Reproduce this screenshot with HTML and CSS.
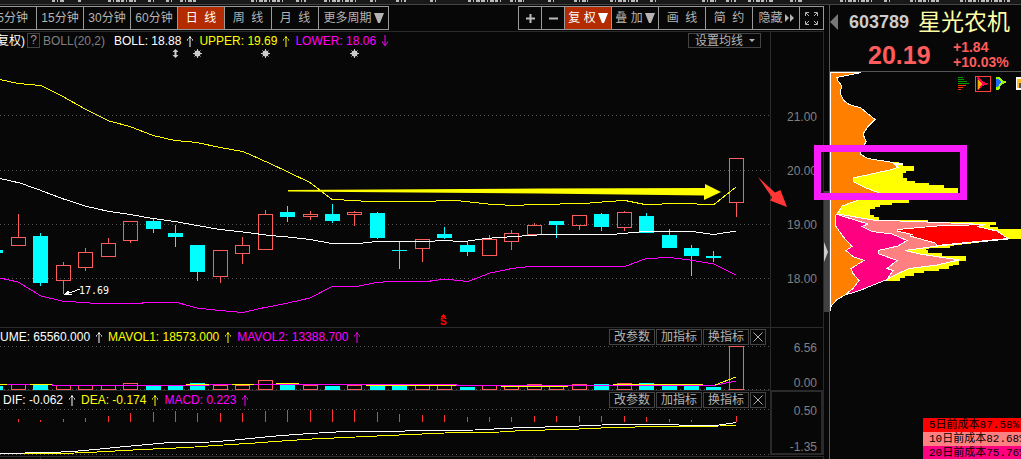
FILE: index.html
```html
<!DOCTYPE html>
<html lang="zh-CN">
<head>
<meta charset="utf-8">
<title>603789 星光农机</title>
<link rel="stylesheet" href="styles.css">
</head>
<body>
<svg class="defs" aria-hidden="true">
  <symbol id="up" viewBox="0 0 8 12"><path d="M4 1v11M3 2.5h2M1.5 5.5v-1l1-1M6.5 5.5v-1l-1-1" fill="none" stroke="currentColor"/></symbol>
  <symbol id="down" viewBox="0 0 8 12"><path d="M4 0v11M1.500 6.500v1l2.500 3l2.500-3v-1" fill="none" stroke="currentColor"/></symbol>
  <symbol id="close" viewBox="0 0 10 10"><path d="M.5.5l9 9M9.500.5l-9 9" fill="none" stroke="currentColor"/></symbol>
  <symbol id="tri" viewBox="0 0 10 10"><path d="M0 0h10L6 10H4z" fill="currentColor"/></symbol>
</svg>
<div class="app">
  <div class="strip"><svg viewBox="0 0 1021 4" preserveAspectRatio="none"><path d="M52 1h12M78 1h4M108 1h28M148 1h8M166 1h8M180 1h16M251 1h32M296 1h10M324 1h34M370 1h6M396 1h10M430 1h8M468 1h14M482 1h20M510 1h14M548 1h8M574 1h14M610 1h28M650 1h6M702 1h14M726 1h10M748 1h26M790 1h12M840 1h32M884 1h8M910 1h30M960 1h50"/></svg></div>
  <div class="body">
    <main class="main">
      <div class="toolbar">
        <div class="group periods">
          <button class="tb first">5分钟</button><button class="tb">15分钟</button><button class="tb">30分钟</button><button class="tb">60分钟</button><button class="tb on">日&nbsp; 线</button><button class="tb">周&nbsp; 线</button><button class="tb">月&nbsp; 线</button><button class="tb wide">更多周期<svg class="tri"><use href="#tri"/></svg></button>
        </div>
        <div class="group">
          <button class="tb small" aria-label="放大"><svg class="pm" viewBox="0 0 9 9"><path d="M0 4.500h9M4.500 0v9"/></svg></button><button class="tb small" aria-label="缩小"><svg class="pm" viewBox="0 0 9 9"><path d="M0 4.500h9"/></svg></button><button class="tb on">复 权<svg class="tri"><use href="#tri"/></svg></button><button class="tb">叠 加<svg class="tri"><use href="#tri"/></svg></button><button class="tb">画&nbsp; 线</button><button class="tb">简&nbsp; 约</button><button class="tb">隐藏<svg class="ff" viewBox="0 0 9 8"><path d="M0 0l4 4l-4 4zM5 0l4 4l-4 4z"/></svg></button><button class="tb small last" aria-label="全屏"><svg class="full" viewBox="0 0 13 13"><path d="M.5 4V.5H4M9 .5h3.500V4M12.500 9v3.500H9M4 12.500H.5V9M1 1l3 3M12 1L9 4M12 12L9 9M1 12l3-3"/></svg></button>
        </div>
      </div>
      <section class="panel k">
        <div class="plot">
          <header class="info">
            <span class="clip">复权)</span><button class="help">?</button><span class="dim">BOLL(20,2)</span>
            <span class="val">BOLL: 18.88<svg class="arr"><use href="#up"/></svg></span>
            <span class="val yellow">UPPER: 19.69<svg class="arr"><use href="#up"/></svg></span>
            <span class="val magenta">LOWER: 18.06<svg class="arr"><use href="#down"/></svg></span>
            <button class="mini avg">设置均线<svg class="caret" viewBox="0 0 6 3"><path d="M0 0h6L3 3z"/></svg></button>
          </header>
          <svg class="chart candles" viewBox="0 48 770 279" preserveAspectRatio="xMaxYMin meet">
            <path class="grid" d="M0 115.500H772M0 170.500H772M0 224.500H772M0 278.500H772"/>
            <g class="mark"><path d="M175.500 49l3 3h-2v3h2l-3 3l-3-3h2v-3h-2z"/>
              <g id="star"><circle cx="197.500" cy="53.500" r="3"/><path class="rays" d="M197.500 49v9M193 53.500h9M194.500 50.500l6 6M200.500 50.500l-6 6"/></g><use href="#star" x="68"/><use href="#star" x="157"/></g>
            <path class="red" d="M11.500 237.500h14v8h-14zM18.500 214v23M56.500 265.500h14v15h-14zM63.500 262v3M63.500 281v13M78.500 252.500h14v15h-14zM85.500 248v4M85.500 268v3M101.500 243.500h14v13h-14zM108.500 238v5M123.500 221.500h14v19h-14zM130.500 241v2M213.500 250.500h14v26h-14zM220.500 277v6M235.500 245.500h14v8h-14zM242.500 237v8M242.500 254v10M258.500 214.500h14v35h-14zM265.500 210v4M303.500 214.500h14v2h-14zM310.500 211v3M310.500 217v3M347.500 212.500h14v2h-14zM354.500 211v1M354.500 215v11M415.500 239.500h14v9h-14zM422.500 249v13M482.500 239.500h14v16h-14zM489.500 235v4M504.500 233.500h14v8h-14zM511.500 230v3M511.500 242v8M527.500 225.500h14v9h-14zM534.500 223v2M572.500 215.500h14v10h-14zM579.500 226v4M617.500 212.500h14v15h-14zM624.500 211v1M624.500 228v3M729.500 158.500h14v44h-14zM736.500 203v14"/>
            <path class="cyan" d="M0 250h3v3h-3zM33 236h15v47h-15zM40 233h1v53h-1zM146 221h15v8h-15zM153 219h1v14h-1zM168 233h15v4h-15zM175 225h1v22h-1zM190 245h15v27h-15zM197 272h1v9h-1zM280 212h15v5h-15zM287 206h1v16h-1zM325 214h15v7h-15zM332 204h1v19h-1zM370 213h15v25h-15zM377 212h1v27h-1zM392 250h15v1h-15zM399 242h1v27h-1zM437 234h15v4h-15zM444 227h1v12h-1zM460 245h15v7h-15zM467 242h1v14h-1zM549 221h15v4h-15zM556 225h1v13h-1zM594 214h15v13h-15zM601 213h1v18h-1zM639 216h15v17h-15zM646 213h1v4h-1zM662 235h15v13h-15zM669 229h1v7h-1zM684 248h15v8h-15zM691 245h1v31h-1zM706 256h15v2h-15zM713 251h1v11h-1z"/>
            <polyline class="line yellow" points="0,79.500 18,83.500 41,85.500 62,96 85,109 109,121 130,126.500 153,135.500 175,140.500 197,142.500 220,147.500 243,151.500 270,163.500 288,172 310,182.500 332,199.500 355,200.500 367,201.500 433,201.500 440,200.500 456,200.500 470,202 492,204.500 518,205.500 530,204.500 545,204.500 590,203 608,201.500 625,200.500 645,204.500 680,203.500 714,204.500 736,187"/>
            <polyline class="line white" points="0,178.500 20,183 41,190.500 62,198.500 85,206 109,211.500 130,214.500 153,218.500 175,221.500 197,225.500 220,229.500 243,232 270,235.500 288,237 310,239.500 332,243.500 358,243.500 377,241.500 430,241.500 440,240.500 465,241.500 485,238.500 530,235.500 545,234.500 612,234.500 645,231.500 692,231.500 714,234.500 736,231"/>
            <polyline class="line magenta" points="0,278 18,282 41,296 62,301 97,303.500 140,303.500 145,302.500 177,302.500 197,308 220,310.500 243,312.500 260,308.500 288,303 310,298 332,286.500 356,286.500 377,282.500 390,281.500 427,281.500 445,279 468,281.500 490,273 512,268.500 530,266.500 625,266.500 646,258.500 670,257.500 690,260 714,264 736,275"/>
            <path class="pointer" d="M80 289L68 293.500"/><path class="head" d="M64 294.500l4.500-4l1 3l2 1z"/>
            <text class="low" x="79" y="294">17.69</text>
            <path class="event" d="M443.500 314l3 3h-6z"/><text class="s" x="440" y="325">S</text>
            <path class="draw-yellow" d="M288 190L540 188.500L705 188V184L721 192L704 200V195.500L540 193.500L288 191.500z"/>
            <path class="draw-red" d="M758 177L775 192.500L780.500 190L787 207L770 200.500L772 197.500z"/>
          </svg>
        </div>
        <div class="axis"><span>21.00</span><span>20.00</span><span>19.00</span><span>18.00</span></div>
      </section>
      <section class="panel vol">
        <div class="plot">
          <header class="info">
            <span class="val cut">UME: 65560.000<svg class="arr"><use href="#up"/></svg></span>
            <span class="val yellow">MAVOL1: 18573.000<svg class="arr"><use href="#up"/></svg></span>
            <span class="val magenta">MAVOL2: 13388.700<svg class="arr"><use href="#up"/></svg></span>
            <div class="tools"><button class="mini">改参数</button><button class="mini">加指标</button><button class="mini">换指标</button><button class="mini x" aria-label="关闭"><svg><use href="#close"/></svg></button></div>
          </header>
          <svg class="chart volume" viewBox="0 346 770 44" preserveAspectRatio="xMaxYMin meet">
            <path class="grid" d="M0 346.500H772M0 389.500H770"/>
            <path class="red" d="M11.500 389.500v-5h14v5zM56.500 389.500v-4h14v4zM78.500 389.500v-4h14v4zM101.500 389.500v-4h14v4zM123.500 389.500v-6h14v6zM213.500 389.500v-4h14v4zM235.500 389.500v-4h14v4zM258.500 389.500v-9h14v9zM303.500 389.500v-4h14v4zM347.500 389.500v-4h14v4zM415.500 389.500v-4h14v4zM437.500 389.500v-4h14v4zM482.500 389.500v-4h14v4zM504.500 389.500v-3h14v3zM527.500 389.500v-5h14v5zM549.500 389.500v-3h14v3zM572.500 389.500v-5h14v5zM617.500 389.500v-6h14v6zM729.500 389.500v-43h14v43z"/>
            <path class="cyan" d="M0 386h3v4h-3zM33 385h15v5h-15zM146 386h15v4h-15zM168 386h15v4h-15zM190 383h15v7h-15zM280 385h15v5h-15zM325 386h15v4h-15zM370 386h15v4h-15zM392 386h15v4h-15zM460 387h15v3h-15zM594 384h15v6h-15zM639 383h15v7h-15zM662 386h15v4h-15zM684 385h15v5h-15zM706 387h15v3h-15z"/>
            <polyline class="line magenta" points="0,384.500 52,384.500 53,385.500 208,385.500 209,384.500 456,384.500 457,385.500 714,385.500 736,381"/>
            <path class="line yellow" d="M0 384.500h7M30 384.500h22M186 384.500h23M232 384.500h22M276 383.500h23M366 385.500h90M501 386.500h67M613 384.500h90M715 385L736 377"/>
          </svg>
        </div>
        <div class="axis"><span>6.56</span><span>0.00</span></div>
      </section>
      <section class="panel macd">
        <div class="plot">
          <header class="info">
            <span class="val lead">DIF: -0.062<svg class="arr"><use href="#up"/></svg></span>
            <span class="val yellow">DEA: -0.174<svg class="arr"><use href="#up"/></svg></span>
            <span class="val magenta">MACD: 0.223<svg class="arr"><use href="#up"/></svg></span>
            <div class="tools"><button class="mini">改参数</button><button class="mini">加指标</button><button class="mini">换指标</button><button class="mini x" aria-label="关闭"><svg><use href="#close"/></svg></button></div>
          </header>
          <svg class="chart macds" viewBox="0 409 770 46" preserveAspectRatio="xMaxYMin meet">
            <path class="grid" d="M0 409.500H770M0 454.500H770"/>
            <path class="bars" d="M18.500 422v-3M40.500 422v-2M63.500 422v-3M85.500 422v-4M108.500 422v-6M130.500 422v-9M153.500 422v-10M175.500 422v-11M197.500 422v-9M220.500 422v-9M242.500 422v-9M265.500 422v-11M287.500 422v-12M310.500 422v-12M332.500 422v-12M354.500 422v-12M377.500 422v-10M399.500 422v-8M422.500 422v-7M444.500 422v-7M467.500 422v-5M489.500 422v-5M511.500 422v-5M534.500 422v-6M556.500 422v-6M579.500 422v-6M601.500 422v-6M624.500 422v-6M646.500 422v-5M669.500 422v-3M691.500 422v-2M736.500 422v-6"/>
            <polyline class="line yellow" points="0,454 75,453 97,452 142,449.500 188,447.500 208,446 255,443 282,441 312,439 345,437.500 388,435.500 411,434.500 456,432.500 500,432 523,430.500 568,429.500 590,428.500 613,427.500 658,426.500 720,426 736,425.500"/>
            <polyline class="line white" points="0,453.500 50,452.500 73,451.500 100,449 125,446.500 148,444.500 170,442.500 210,442 230,440.500 260,437.500 282,435.500 310,433.500 345,431.500 400,431.500 411,430.500 475,430 523,427.500 568,426.500 613,424.500 658,424.500 700,425.500 716,425.500 736,422.500"/>
          </svg>
        </div>
        <div class="axis"><span>0.50</span><span>-1.35</span></div>
      </section>
      <footer class="dates"><span></span><span></span><span></span></footer>
    </main>
    <div class="gutter"><div class="thumb"><svg viewBox="0 0 4 20"><path d="M0 0L4 10L0 20z"/></svg></div></div>
    <aside class="side">
      <header class="quote">
        <h1><svg class="back" viewBox="0 0 8 16"><path d="M8 0v16L0 8z"/></svg><span class="code">603789</span><span class="name">星光农机</span></h1>
        <div class="price"><strong>20.19</strong><div class="chg"><span>+1.84</span><span>+10.03%</span></div></div>
      </header>
      <div class="dist">
        <svg class="chips" viewBox="0 72 191 240" preserveAspectRatio="xMinYMin meet">
          <path fill="#ff0" d="M48 160L73 163V166H84V171H76V173H73V178H77V181H85V183H99V185H114V188H128V193H130V197H105V200H79V203H62V205H50V207H45V209H40V215H44V217H49V220H98V222H166V225H160V227H168V229H191V239H178L120 246V248H100L95 250H98V253H112V256H136V261H129V265H123V266H119V269H109V271H94V273H84V276H75V278H70V281H57L8 214V180z"/>
          <path class="edge" fill="#ff8080" d="M8 214L43 220L97 222L155 224.500L147 227L178 239L107 246L75 250.500L90 254L129 260L107 265L79 268.500L60 277.500L57 280L30 280z"/>
          <path class="edge" fill="red" d="M155 224.500L107 226L67 229.500V231L82 234.500L80 236L105 243L107 245.500L147 241.500L178 238.500L167 231L147 226.500z"/>
          <path class="edge" fill="#ff0080" d="M6 214L20 218.500L38 224L32 226.500L42 231.500L62 234L77 240.500L68 246L48 250.500V253.500L67 260.500L57 268.500L63 270.500L57 279.500L42 285.500L30 290.500L15 295L5 290z"/>
          <path class="edge" fill="#ff8000" d="M.5 72.500H31L7 77.500L8 81L12 86L10 93L14 100.500L19 104.500L31 108L45 119.500L38 126.500L33 134L36 141.500L30 154L38 158.500L63 162.500L68 167.500L60 170L48 172.500L23 178V181.500L35 187.500L48 192.500L27 200.500L12 206L9 211.500L6 215L5 225L13 236.500L22 246.500L16 250.500L23 256.500L34 260.500L21 268.500L23 273.500L29 280.500L23 288.500L15 295L7 299.500L.5 307z"/>
          <path d="M64 163h9v1.500h-9z" fill="#fff"/><path d="M.5 72V311" stroke="#fff"/>
        </svg>
        <nav class="modes">
          <button aria-label="筹码分布"><svg viewBox="0 0 12 14"><path d="M0 .5h5M0 2.500h6M0 4.500h9M0 6.500h11" stroke="#009800"/><path d="M0 8.500h8M0 10.500h5M0 12.500h3" stroke="#ff3000"/></svg></button>
          <button class="sel" aria-label="近期成本"><svg viewBox="0 0 12 14"><path d="M0 0h2l3 4l7 3l-7 2l-3 4H0z" fill="#f05"/><path d="M0 2l3 2l2 3l-3 5H0z" fill="#fa0"/><path d="M.5 0v13" stroke="#04c"/></svg></button>
          <button aria-label="远期成本"><svg viewBox="0 0 12 14"><path d="M0 0h3l3 3l5 2l-6 3l-2 5H0z" fill="#9f0"/><path d="M0 2h2l3 3l-2 3l-2 2H0z" fill="#26f"/></svg></button>
          <button class="edgeicon" aria-label="设置"><svg viewBox="0 0 12 14"><path d="M0 0h12v13H0z" fill="#fff"/><path d="M1 2h5v9H1z" fill="#fb2"/><path d="M3 6h3v5H3z" fill="#555"/></svg></button>
        </nav>
      </div>
      <ul class="costs"><li>5日前成本87.58%</li><li>10日前成本82.68%</li><li>20日前成本75.76%</li></ul>
    </aside>
    <div class="highlight"></div>
  </div>
</div>
</body>
</html>
```
FILE: styles.css
```css
* { box-sizing: border-box; }
body { margin: 0; background: #070707; color: #fff; font: 12px/16px "Liberation Sans", "Noto Sans CJK SC", sans-serif; overflow: hidden; }
button { font: inherit; color: inherit; background: none; border: 0; padding: 0; margin: 0; border-radius: 0; }
svg { display: block; flex: none; }
.defs { position: absolute; width: 0; height: 0; }
.app { display: flex; flex-direction: column; height: 100vh; }
.strip { flex: none; height: 5px; background: #191919; border-bottom: 1px solid #444; }
.strip svg { width: 100%; height: 4px; }
.strip path { stroke: #bbb; stroke-width: 2; stroke-dasharray: 3 2 1 2 4 1; shape-rendering: crispEdges; }
.body { flex: 1; min-height: 0; display: flex; position: relative; }
.main { flex: 1; min-width: 0; display: flex; flex-direction: column; }

.toolbar { flex: none; display: flex; justify-content: space-between; padding: 1px 0; height: 26px; }
.group { display: flex; border: 1px solid #999; }
.periods { border-left: 0; }
.tb { width: 47px; height: 22px; display: flex; align-items: center; justify-content: center; gap: 2px; white-space: nowrap; border-right: 1px solid #999; color: #b4b4b4; }
.tb.first { width: 37px; justify-content: flex-end; padding-right: 8px; }
.tb.small { width: 23px; }
.tb.wide { width: 69px; }
.tb:last-child { border-right: 0; }
.tb.on { background: #b32b00; color: #fff; }
.tri { width: 10px; height: 10px; }
.pm { width: 9px; height: 9px; stroke: #bbb; stroke-width: 2; }
.ff { width: 9px; height: 8px; fill: #b4b4b4; }
.full { width: 13px; height: 13px; fill: none; stroke: #b4b4b4; }

.panel { display: flex; flex: none; border-top: 1px solid #2a2a2a; border-right: 1px solid #2a2a2a; }
.plot { flex: 1; min-width: 0; }
.info { display: flex; align-items: center; height: 18px; white-space: nowrap; }
.chart { width: 100%; shape-rendering: crispEdges; }
.candles { height: 279px; overflow: visible; position: relative; }
.volume { height: 44px; }
.macds { height: 46px; }
.axis { flex: none; width: 53px; border-left: 1px solid #2a2a2a; padding-right: 6px; color: #808080; text-align: right; display: flex; flex-direction: column; justify-content: space-between; }
.k { height: 296px; }
.k .info { height: 16px; padding-top: 1px; }
.k .axis { justify-content: flex-start; padding-top: 58px; }
.k .axis span { height: 54px; line-height: 54px; }
.vol .axis { padding-top: 13px; line-height: 14px; }
.macd .axis { border: 2px solid #2a2a2a; border-top-width: 1px; padding: 13px 4px 0 0; line-height: 12px; }
.dates { flex: 1; margin-top: 1px; border-top: 1px solid #2a2a2a; display: flex; }
.dates span { border-right: 1px solid #2a2a2a; }
.dates span:nth-child(1) { width: 41px; }
.dates span:nth-child(2) { flex: 1; }
.dates span:nth-child(3) { width: 289px; }

.clip { width: 25px; display: flex; justify-content: flex-end; }
.help { width: 13px; height: 15px; line-height: 13px; margin: 0 3px 0 2px; border: 1px solid #444; color: #999; }
.dim { color: #808080; width: 71px; }
.val { display: flex; align-items: center; gap: 5px; margin-right: 5px; }
.arr { width: 8px; height: 12px; }
.lead { margin-left: 3px; }
.yellow { color: #ff0; }
.magenta { color: #f0f; }
.mini { height: 16px; line-height: 14px; padding: 0 4px; border: 1px solid #444; color: #b4b4b4; display: flex; align-items: center; justify-content: center; }
.avg { width: 73px; height: 15px; margin: 0 9px 0 auto; gap: 6px; padding-left: 5px; }
.caret { width: 6px; height: 3px; fill: #b4b4b4; }
.tools { display: flex; gap: 1px; margin: 0 4px 0 auto; }
.tools .mini { width: 46px; }
.tools .x { width: 16px; padding: 0; }
.x svg { width: 10px; height: 10px; }

.grid { stroke: #555; stroke-dasharray: 1 3; }
.red { fill: none; stroke: #ff5c5c; }
.cyan { fill: #0ff; }
.line { fill: none; stroke: currentColor; }
.white { color: #fff; }
.mark { fill: #ccc; shape-rendering: auto; }
.rays { stroke: #ccc; }
.pointer { stroke: #fff; }
.head { fill: #fff; }
.low { fill: #fff; font: 10px "DejaVu Sans Mono", monospace; }
.event, .s { fill: red; }
.s { font: bold 10px "Liberation Sans", sans-serif; }
.bars { stroke: #f33; }
.draw-yellow { fill: #ff0; shape-rendering: auto; }
.draw-red { fill: #ff3636; shape-rendering: auto; }

.gutter { flex: none; width: 6px; padding-top: 186px; border-right: 1px solid #555; }
.thumb { height: 121px; background: #404040; display: flex; align-items: center; }
.thumb svg { width: 4px; height: 20px; fill: #ccc; }
.side { flex: none; width: 191px; display: flex; flex-direction: column; overflow: hidden; }
.quote { flex: none; height: 67px; border-bottom: 1px solid #555; }
h1 { margin: 0; height: 34px; display: flex; align-items: center; font-size: 18px; font-weight: bold; white-space: nowrap; }
.back { width: 8px; height: 16px; fill: #777; margin-right: 11px; }
.code { color: #ccc; width: 69px; }
.name { color: #ffffa8; font-size: 23px; font-weight: normal; }
.price { display: flex; align-items: center; color: #ff5c5c; padding-left: 38px; height: 32px; }
.price strong { font-size: 25px; width: 85px; }
.chg { display: flex; flex-direction: column; font-size: 14px; font-weight: bold; line-height: 15px; }
.dist { flex: 1; min-height: 0; position: relative; }
.chips { width: 191px; height: 240px; shape-rendering: crispEdges; }
.edge { stroke: #fff; }
.modes { position: absolute; top: 4px; left: 126px; display: flex; gap: 3px; }
.modes button { width: 16px; height: 16px; display: flex; align-items: center; justify-content: center; flex: none; }
.modes svg { width: 12px; height: 14px; shape-rendering: crispEdges; }
.modes .sel { border: 1px solid #ff4040; }
.modes .edgeicon { padding-left: 2px; }
.costs { flex: none; list-style: none; margin: 0 0 0 93px; padding: 0; height: 41px; overflow: hidden; color: #000; font: 11px/14px "Liberation Mono", "Noto Sans CJK SC", monospace; white-space: nowrap; }
.costs li { height: 14px; padding-left: 6px; background: red; }
.costs li:nth-child(2) { background: #ff8080; }
.costs li:nth-child(3) { background: #ff0080; }
.highlight { position: absolute; right: 54px; top: 140px; width: 153px; height: 55px; border: 7px solid #f81cf8; }
```
